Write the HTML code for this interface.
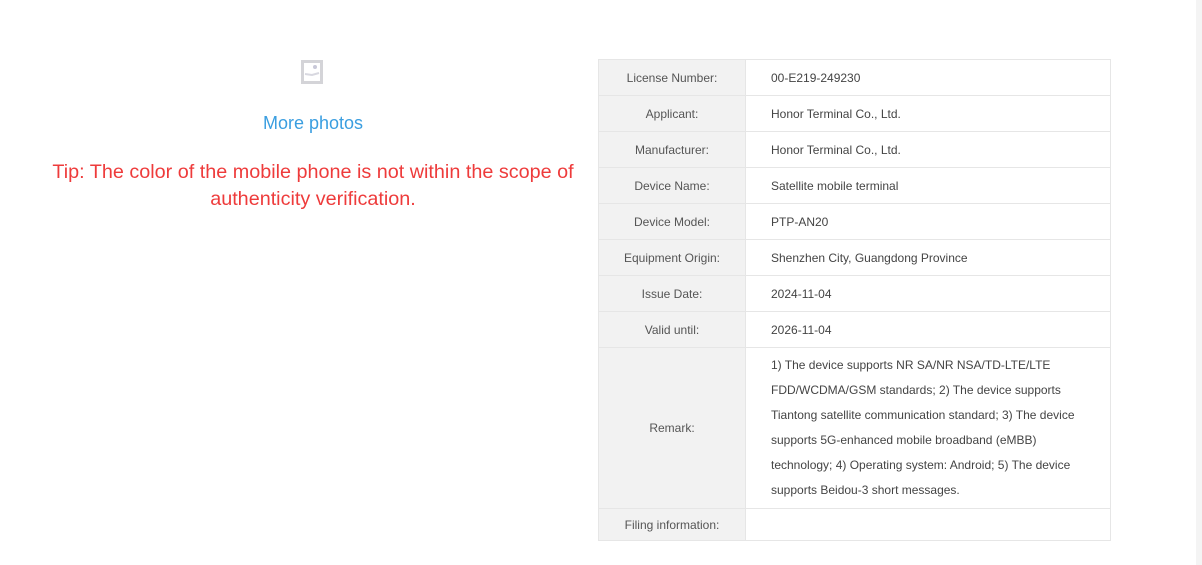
<!DOCTYPE html>
<html><head><style>
body{margin:0;width:1202px;height:565px;background:#fff;font-family:"Liberation Sans",sans-serif;position:relative;overflow:hidden}
.icon{position:absolute;left:301px;top:60px;width:22px;height:24px;box-sizing:border-box;border:3px solid #d4d4d8}
.more{position:absolute;left:0;width:626px;top:113px;text-align:center;color:#3a9ee0;font-size:18px}
.tip{position:absolute;left:20px;width:586px;top:159px;text-align:center;color:#ee3b3b;font-size:19.8px;line-height:27px}
table{position:absolute;left:598px;top:59px;border-collapse:collapse;font-size:12px;color:#444}
td{border:1px solid #e6e6e6;height:35px;padding:0}
td.l{width:146px;background:#f2f2f2;text-align:center;color:#555}
td.v{width:365px;padding-left:25px;box-sizing:border-box}
td.r{line-height:25px;padding:4px 30px 4px 25px;height:161px}
.sb{position:absolute;right:0;top:0;width:6px;height:565px;background:#f4f4f4}
</style></head><body>
<div class="icon"><svg width="16" height="18" style="position:absolute;left:0;top:0"><circle cx="11" cy="4" r="2" fill="#c8c8d8"/><path d="M1 11 L8 12 L15 10" stroke="#d8d8e0" stroke-width="2" fill="none"/></svg></div>
<div class="more">More photos</div>
<div class="tip">Tip: The color of the mobile phone is not within the scope of authenticity verification.</div>
<table>
<tr><td class="l">License Number:</td><td class="v">00-E219-249230</td></tr>
<tr><td class="l">Applicant:</td><td class="v">Honor Terminal Co., Ltd.</td></tr>
<tr><td class="l">Manufacturer:</td><td class="v">Honor Terminal Co., Ltd.</td></tr>
<tr><td class="l">Device Name:</td><td class="v">Satellite mobile terminal</td></tr>
<tr><td class="l">Device Model:</td><td class="v">PTP-AN20</td></tr>
<tr><td class="l">Equipment Origin:</td><td class="v">Shenzhen City, Guangdong Province</td></tr>
<tr><td class="l">Issue Date:</td><td class="v">2024-11-04</td></tr>
<tr><td class="l">Valid until:</td><td class="v">2026-11-04</td></tr>
<tr><td class="l">Remark:</td><td class="v r">1) The device supports NR SA/NR NSA/TD-LTE/LTE FDD/WCDMA/GSM standards; 2) The device supports Tiantong satellite communication standard; 3) The device supports 5G-enhanced mobile broadband (eMBB) technology; 4) Operating system: Android; 5) The device supports Beidou-3 short messages.</td></tr>
<tr><td class="l" style="height:31px">Filing information:</td><td class="v" style="height:31px"></td></tr>
</table>
<div class="sb"></div>
</body></html>
